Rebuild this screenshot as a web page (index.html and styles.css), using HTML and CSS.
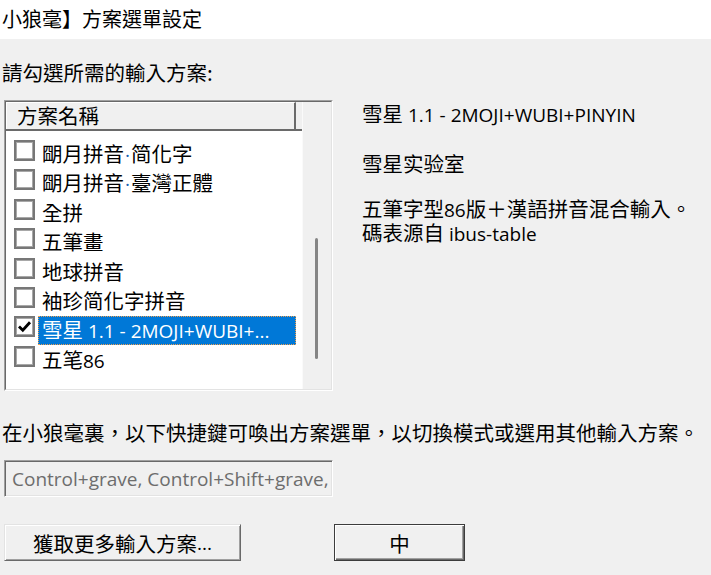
FILE: index.html
```
<!DOCTYPE html>
<html lang="zh-Hant">
<head>
<meta charset="utf-8">
<title>小狼毫】方案選單設定</title>
<link rel="stylesheet" href="styles.css">
</head>
<body>
<div class="titlebar">小狼毫】方案選單設定</div>
<div class="content">
  <div class="prompt">請勾選所需的輸入方案:</div>
  <div class="top">
    <div class="listbox">
      <div class="listbox-inner">
        <div class="list-main">
          <div class="list-header"><div class="col">方案名稱</div></div>
          <div class="list-body">
            <div class="row"><span class="cb"></span><span class="label">朙月拼音<span class="lat dot">·</span>简化字</span></div>
            <div class="row"><span class="cb"></span><span class="label">朙月拼音<span class="lat dot">·</span>臺灣正體</span></div>
            <div class="row"><span class="cb"></span><span class="label">全拼</span></div>
            <div class="row"><span class="cb"></span><span class="label">五筆畫</span></div>
            <div class="row"><span class="cb"></span><span class="label">地球拼音</span></div>
            <div class="row"><span class="cb"></span><span class="label">袖珍简化字拼音</span></div>
            <div class="row sel"><span class="cb"><svg viewBox="0 0 15 15" width="15" height="15"><path d="M2 7.5 L5.8 11.3 L13 3.2" fill="none" stroke="#000" stroke-width="2.8"/></svg></span><span class="label">雪星<span class="lat"> 1.1 - 2MOJI+WUBI+...</span></span></div>
            <div class="row"><span class="cb"></span><span class="label">五笔<span class="lat">86</span></span></div>
          </div>
        </div>
        <div class="scrollbar"><div class="thumb"></div></div>
      </div>
    </div>
    <div class="detail">
      <div class="d-name">雪星<span class="lat"> 1.1 - 2MOJI+WUBI+PINYIN</span></div>
      <div class="d-author">雪星实验室</div>
      <div class="d-desc">五筆字型<span class="lat">86</span>版＋漢語拼音混合輸入<span class="punc">。</span><br>碼表源自<span class="lat"> ibus-table</span></div>
    </div>
  </div>
  <div class="hint">在小狼毫裏<span class="punc">，</span>以下快捷鍵可喚出方案選單<span class="punc">，</span>以切換模式或選用其他輸入方案<span class="punc">。</span></div>
  <div class="hotkeys"><span class="lat">Control+grave, Control+Shift+grave, F4</span></div>
  <div class="buttons">
    <button class="btn btn-more">獲取更多輸入方案<span class="lat">...</span></button>
    <button class="btn btn-default">中</button>
  </div>
</div>
</body>
</html>
```
FILE: styles.css
```
html, body {
  margin: 0;
  padding: 0;
}
body {
  width: 711px;
  height: 575px;
  overflow: hidden;
  background: #f0f0f0;
  font-family: "Noto Sans CJK TC", "Noto Sans CJK SC", sans-serif;
  font-size: 20.5px;
  color: #000;
}
.lat {
  font-family: "Open Sans", "Noto Sans CJK TC", sans-serif;
  font-size: 19px;
}
.punc {
  font-family: "Noto Sans CJK SC", sans-serif;
}
.dot {
  color: #1a5fb4;
  padding: 0 1px;
}
.titlebar {
  height: 39px;
  line-height: 38px;
  background: #fff;
  font-size: 20px;
  padding-left: 2px;
}
.content {
  padding-left: 2px;
}
.prompt {
  margin-top: 20px;
  line-height: 26px;
}
.top {
  display: flex;
  gap: 29px;
  margin-top: 15px;
  margin-left: 2px;
}
.listbox {
  width: 329px;
  height: 291px;
  box-sizing: border-box;
  border: 1px solid;
  border-color: #a0a0a0 #fff #fff #a0a0a0;
  flex: none;
}
.listbox-inner {
  height: 100%;
  box-sizing: border-box;
  border: 1px solid;
  border-color: #696969 #e3e3e3 #e3e3e3 #696969;
  display: flex;
}
.list-main {
  width: 296px;
  display: flex;
  flex-direction: column;
}
.list-header {
  height: 29px;
  box-sizing: border-box;
  border-bottom: 2px solid #6a6a6a;
  background: #f0f0f0;
  display: flex;
}
.col {
  width: 290px;
  box-sizing: border-box;
  border-top: 1px solid #fff;
  border-left: 1px solid #fff;
  border-right: 2px solid #6a6a6a;
  padding-left: 10px;
  line-height: 25px;
}
.list-body {
  flex: 1;
  background: #fff;
  padding-top: 9px;
  padding-left: 8px;
  overflow: hidden;
}
.row {
  display: flex;
  height: 29.4px;
}
.cb {
  flex: none;
  width: 21px;
  height: 21px;
  box-sizing: border-box;
  border: 2px solid #777;
  box-shadow: inset 1px 1px #a8a8a8, inset -1px -1px #a8a8a8;
  background: #fff;
  display: flex;
  align-items: center;
  justify-content: center;
}
.label {
  margin-left: 3px;
  width: 258px;
  height: 29px;
  box-sizing: border-box;
  border: 1px solid transparent;
  padding-left: 3px;
  line-height: 25px;
  white-space: nowrap;
}
.row.sel .label {
  background: #0078d7;
  color: #fff;
  border: 1px dotted #f0a050;
}
.scrollbar {
  width: 29px;
  box-sizing: border-box;
  background: #f0f0f0;
  border-left: 1px solid #fafafa;
  padding-top: 136px;
}
.thumb {
  width: 3px;
  height: 121px;
  margin-left: 12px;
  background: #858585;
  border-radius: 2px;
}
.d-name {
  line-height: 26px;
}
.d-author {
  margin-top: 22px;
  line-height: 26px;
}
.d-desc {
  margin-top: 21px;
  line-height: 22px;
}
.hint {
  margin-top: 28px;
  line-height: 26px;
  white-space: nowrap;
}
.hotkeys {
  margin-top: 15px;
  margin-left: 2px;
  width: 329px;
  height: 37px;
  box-sizing: border-box;
  border: 1px solid;
  border-color: #a0a0a0 #fff #fff #a0a0a0;
  box-shadow: inset 1px 1px #696969, inset -1px -1px #e3e3e3;
  padding-left: 7px;
  line-height: 33px;
  white-space: nowrap;
  overflow: hidden;
  color: #6d6d6d;
}
.buttons {
  display: flex;
  gap: 93px;
  margin-top: 27px;
  margin-left: 2px;
}
.btn {
  height: 37px;
  padding: 0;
  margin: 0;
  font: inherit;
  color: #000;
  background: #f0f0f0;
  box-sizing: border-box;
  border: 1px solid;
  border-color: #e3e3e3 #696969 #696969 #e3e3e3;
  box-shadow: inset 1px 1px #fff, inset -1px -1px #a0a0a0;
  display: flex;
  align-items: center;
  justify-content: center;
  line-height: 26px;
}
.btn-more {
  width: 237px;
}
.btn-default {
  width: 131px;
  border-color: #3c3c3c;
  box-shadow: inset 1px 1px #fff, inset -1px -1px #696969, inset -2px -2px #a0a0a0;
}
```
